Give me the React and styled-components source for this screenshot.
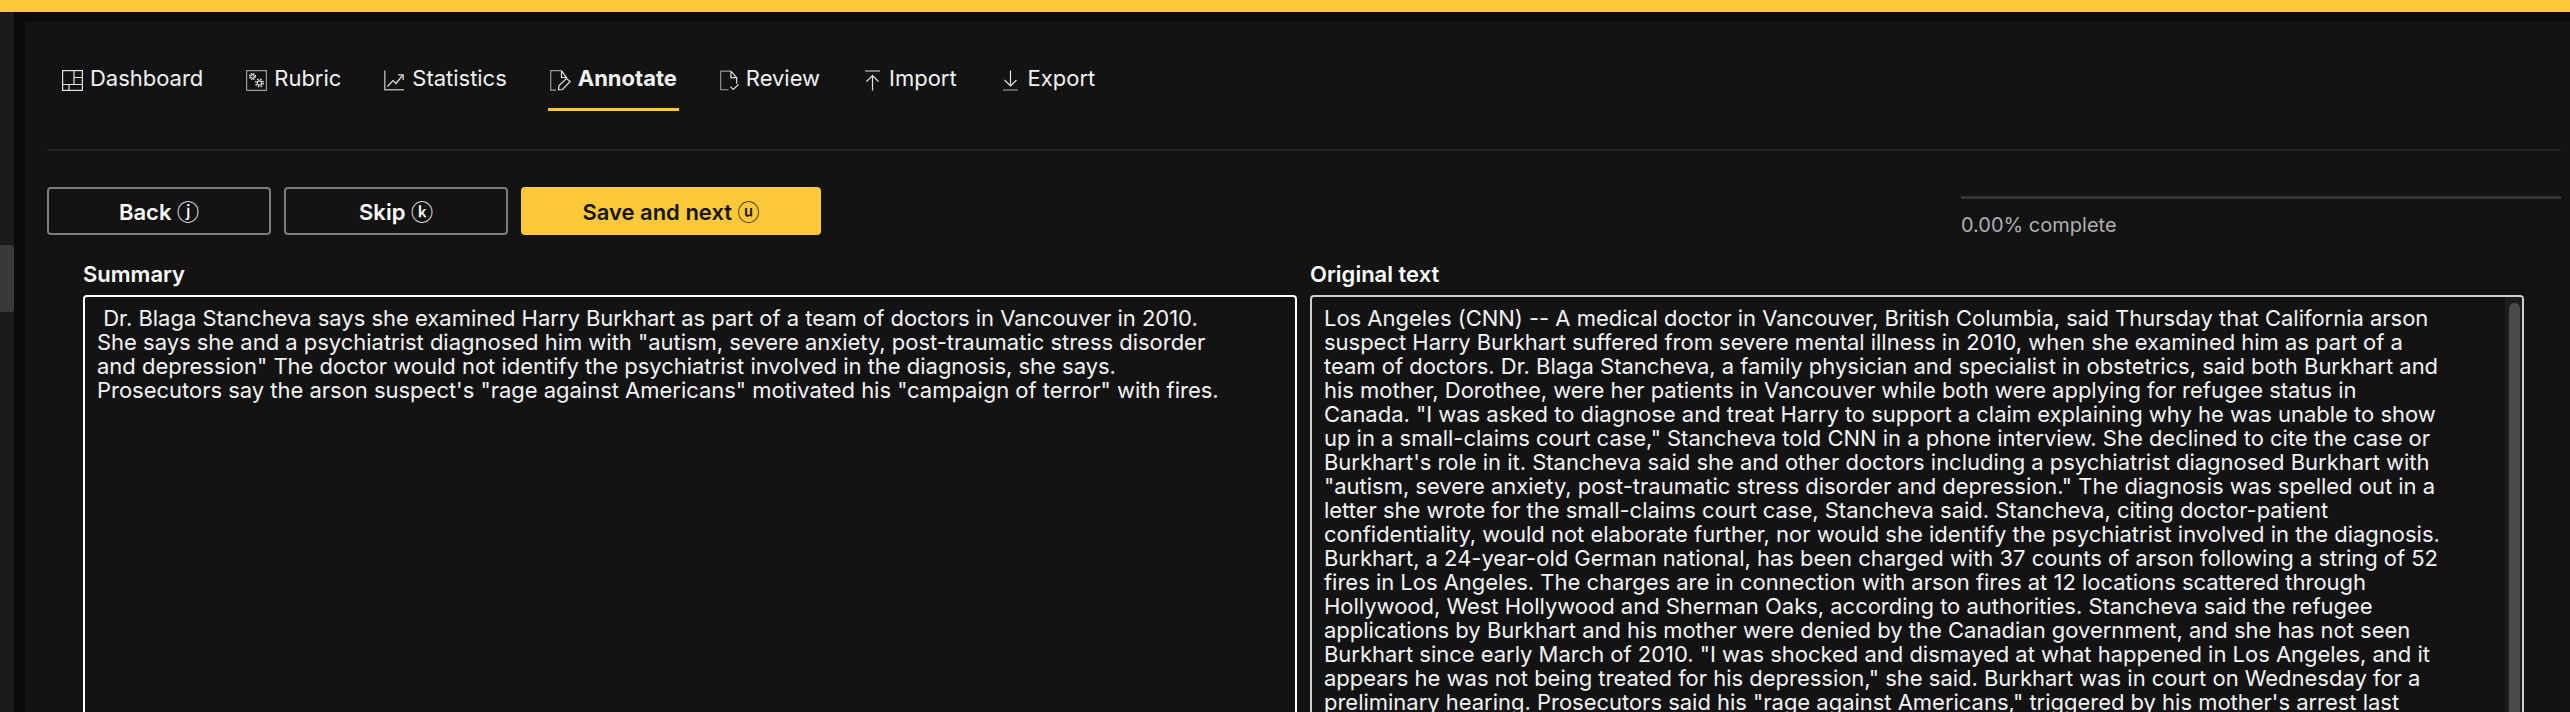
import styled, { createGlobalStyle } from "styled-components";

const GlobalStyle = createGlobalStyle`
  html, body {
    margin: 0;
    padding: 0;
    height: 712px;
    overflow: hidden;
    background-color: #0b0b0b;
    font-family: Inter, "Liberation Sans", sans-serif;
  }
`;

const Page = styled.div`
  height: 712px;
  overflow: hidden;
  display: flex;
  flex-direction: column;
`;
const TopBar = styled.div`
  flex: none;
  height: 12px;
  background-color: #ffc83a;
`;
const Body = styled.div`
  flex: 1;
  display: flex;
  min-height: 0;
`;
const Sidebar = styled.div`
  flex: none;
  width: 14px;
  margin-right: 11px;
  padding-top: 233px;
  background-color: #1b1b1b;
`;
const SidebarThumb = styled.div`
  width: 14px;
  height: 67px;
  border-radius: 0 3px 3px 0;
  background-color: #393939;
`;
const Panel = styled.main`
  flex: 1;
  margin-top: 10px;
  padding: 40px 9px 0 22px;
  background-color: #131313;
  color: #fff;
`;
const Nav = styled.nav`
  display: flex;
  gap: 39px;
  padding-left: 13px;
`;
const Tab = styled.a`
  display: flex;
  align-items: flex-start;
  gap: 7px;
  height: 42px;
  padding: 4px 2px 0;
  border-bottom: 3px solid ${(p) => (p.$active ? "#ffc83a" : "transparent")};
  font-size: 22px;
  line-height: 24px;
  letter-spacing: -0.02px;
  font-weight: ${(p) => (p.$active ? 700 : 400)};
  color: #f2f2f2;
`;
const TabIcon = styled.svg`
  flex: none;
  width: ${(p) => p.$width || 21}px;
  height: 21px;
  margin-top: 4px;
  fill: none;
  stroke: #e2e2e2;
  stroke-width: 1.2;
`;
const Divider = styled.div`
  height: 2px;
  margin-top: 38px;
  background-color: #242424;
`;
const Toolbar = styled.div`
  display: flex;
  justify-content: space-between;
  margin-top: 36px;
`;
const ButtonGroup = styled.div`
  display: flex;
  gap: 13px;
`;
const ActionButton = styled.button`
  width: ${(p) => (p.$primary ? "300px" : "224px")};
  height: 48px;
  padding: 0;
  border: 2px solid ${(p) => (p.$primary ? "#ffc83a" : "#7d7d7d")};
  border-radius: 4px;
  background-color: ${(p) => (p.$primary ? "#ffc83a" : "transparent")};
  color: ${(p) => (p.$primary ? "#141414" : "#fff")};
  font-family: inherit;
  font-size: 22px;
  line-height: 24px;
  font-weight: 600;
`;
const ShortcutKey = styled.span`
  font-family: "Noto Sans CJK JP", sans-serif;
  font-weight: 500;
  line-height: 1;
`;
const Progress = styled.div`
  width: 600px;
  padding-top: 9px;
`;
const ProgressTrack = styled.div`
  height: 3px;
  background-color: #333;
`;
const ProgressLabel = styled.div`
  margin-top: 16px;
  font-size: 20px;
  line-height: 20px;
  color: #b0b0b0;
`;
const Columns = styled.div`
  display: grid;
  grid-template-columns: 1214px 1214px;
  gap: 13px;
  margin-top: 30px;
  padding-left: 36px;
`;
const Label = styled.div`
  font-size: 22px;
  line-height: 18px;
  font-weight: 600;
  margin-bottom: 12px;
`;
const TextBox = styled.div`
  position: relative;
  box-sizing: border-box;
  height: 600px;
  padding: 9px 12px;
  border: 2px solid ${(p) => (p.$dim ? "#cfcfcf" : "#fff")};
  border-radius: 4px;
  overflow: hidden;
`;
const TextBody = styled.p`
  max-width: 1122px;
  margin: 0;
  font-size: 22px;
  line-height: 24px;
  letter-spacing: -0.02px;
  white-space: pre-wrap;
  color: #f4f4f4;
`;
const ScrollTrack = styled.div`
  position: absolute;
  top: 0;
  right: 0;
  bottom: 0;
  width: 17px;
  padding: 6px 2px 0 4px;
  box-sizing: border-box;
  background-color: #1d1d1d;
`;
const ScrollThumb = styled.div`
  height: 100%;
  border-radius: 6px 6px 0 0;
  background-color: #4a4a4a;
`;

const DashboardIcon = () => (
  <TabIcon viewBox="0 0 21 21">
    <rect x="0.6" y="0.6" width="19.8" height="19.8" />
    <path d="M12 0.6V14.5M0.6 14.5H20.4M12 7.5H20.4M7 14.5V20.4" />
  </TabIcon>
);
const RubricIcon = () => (
  <TabIcon viewBox="0 0 21 21">
    <path stroke="#999" d="M0.6 20.4V0.6H20.4V20.4H0.6" />
    <circle cx="6.5" cy="6.5" r="1.8" />
    <circle cx="6.5" cy="6.5" r="3" strokeWidth="1.2" strokeDasharray="1.4 1" />
    <circle cx="13.5" cy="13" r="2.2" />
    <circle cx="13.5" cy="13" r="3.8" strokeWidth="1.4" strokeDasharray="1.6 1.4" />
  </TabIcon>
);
const StatisticsIcon = () => (
  <TabIcon viewBox="0 0 21 21">
    <path stroke="#aaa" strokeWidth="1.5" d="M0.8 0.5V19.8H20" />
    <path d="M3.5 16.5L9 10.5L12 13.5L18.5 5.5" />
    <path d="M14 4.8H19.2V10" />
  </TabIcon>
);
const AnnotateIcon = () => (
  <TabIcon viewBox="0 0 21 21">
    <path stroke="#999" d="M6 20.2H0.7V0.7H11.5" />
    <path d="M11.5 0.7L16.3 7.5H11.5V0.7" />
    <path d="M8.5 19.8L9 15.5L16.5 8.5L20.2 11.5L12.5 19.5Z" />
  </TabIcon>
);
const ReviewIcon = () => (
  <TabIcon viewBox="0 0 20 21" $width={19}>
    <path stroke="#999" d="M9 20.2H0.7V0.7H11.5" />
    <path d="M11.5 0.7L17.5 7.5H11.5V0.7M17.5 7.5V14" />
    <path d="M11 17L14 20L19.5 14.5" />
  </TabIcon>
);
const ImportIcon = () => (
  <TabIcon viewBox="1 0 19 21" $width={19}>
    <path d="M3 1H18M10.5 20.5V6M4.5 11.5L10.5 5.5L16.5 11.5" />
  </TabIcon>
);
const ExportIcon = () => (
  <TabIcon viewBox="0 0 21 21">
    <path d="M10.5 0.5V15.5M4.5 10L10.5 16L16.5 10" />
    <path stroke="#999" d="M3 20H18" />
  </TabIcon>
);

const tabs = [
  { label: "Dashboard", icon: <DashboardIcon /> },
  { label: "Rubric", icon: <RubricIcon /> },
  { label: "Statistics", icon: <StatisticsIcon /> },
  { label: "Annotate", icon: <AnnotateIcon />, active: true },
  { label: "Review", icon: <ReviewIcon /> },
  { label: "Import", icon: <ImportIcon /> },
  { label: "Export", icon: <ExportIcon /> },
];

const summary = ` Dr. Blaga Stancheva says she examined Harry Burkhart as part of a team of doctors in Vancouver in 2010.
She says she and a psychiatrist diagnosed him with "autism, severe anxiety, post-traumatic stress disorder and depression" The doctor would not identify the psychiatrist involved in the diagnosis, she says. Prosecutors say the arson suspect's "rage against Americans" motivated his "campaign of terror" with fires.`;

const original = `Los Angeles (CNN) -- A medical doctor in Vancouver, British Columbia, said Thursday that California arson suspect Harry Burkhart suffered from severe mental illness in 2010, when she examined him as part of a team of doctors. Dr. Blaga Stancheva, a family physician and specialist in obstetrics, said both Burkhart and his mother, Dorothee, were her patients in Vancouver while both were applying for refugee status in Canada. "I was asked to diagnose and treat Harry to support a claim explaining why he was unable to show up in a small-claims court case," Stancheva told CNN in a phone interview. She declined to cite the case or Burkhart's role in it. Stancheva said she and other doctors including a psychiatrist diagnosed Burkhart with "autism, severe anxiety, post-traumatic stress disorder and depression." The diagnosis was spelled out in a letter she wrote for the small-claims court case, Stancheva said. Stancheva, citing doctor-patient confidentiality, would not elaborate further, nor would she identify the psychiatrist involved in the diagnosis. Burkhart, a 24-year-old German national, has been charged with 37 counts of arson following a string of 52 fires in Los Angeles. The charges are in connection with arson fires at 12 locations scattered through Hollywood, West Hollywood and Sherman Oaks, according to authorities. Stancheva said the refugee applications by Burkhart and his mother were denied by the Canadian government, and she has not seen Burkhart since early March of 2010. "I was shocked and dismayed at what happened in Los Angeles, and it appears he was not being treated for his depression," she said. Burkhart was in court on Wednesday for a preliminary hearing. Prosecutors said his "rage against Americans," triggered by his mother's arrest last`;

function App() {
  return (
    <Page>
      <GlobalStyle />
      <TopBar />
      <Body>
        <Sidebar>
          <SidebarThumb />
        </Sidebar>
        <Panel>
          <Nav>
            {tabs.map((tab) => (
              <Tab key={tab.label} $active={tab.active}>
                {tab.icon}
                {tab.label}
              </Tab>
            ))}
          </Nav>
          <Divider />
          <Toolbar>
            <ButtonGroup>
              <ActionButton>
                Back <ShortcutKey>ⓙ</ShortcutKey>
              </ActionButton>
              <ActionButton>
                Skip <ShortcutKey>ⓚ</ShortcutKey>
              </ActionButton>
              <ActionButton $primary>
                Save and next <ShortcutKey>ⓤ</ShortcutKey>
              </ActionButton>
            </ButtonGroup>
            <Progress>
              <ProgressTrack />
              <ProgressLabel>0.00% complete</ProgressLabel>
            </Progress>
          </Toolbar>
          <Columns>
            <div>
              <Label>Summary</Label>
              <TextBox>
                <TextBody>{summary}</TextBody>
              </TextBox>
            </div>
            <div>
              <Label>Original text</Label>
              <TextBox $dim>
                <TextBody>{original}</TextBody>
                <ScrollTrack>
                  <ScrollThumb />
                </ScrollTrack>
              </TextBox>
            </div>
          </Columns>
        </Panel>
      </Body>
    </Page>
  );
}

export default App;
